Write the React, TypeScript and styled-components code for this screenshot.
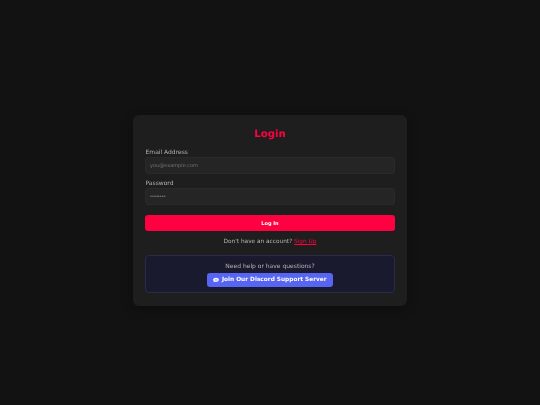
import React from 'react'
import styled, { createGlobalStyle } from 'styled-components'

const GlobalStyle = createGlobalStyle`
  html, body {
    margin: 0;
    padding: 0;
    background: #121212;
  }
  * {
    box-sizing: border-box;
  }
`

const Page = styled.div`
  width: 540px;
  height: 405px;
  padding-top: 16px;
  display: flex;
  align-items: center;
  justify-content: center;
  background: #121212;
  font-family: 'DejaVu Sans', sans-serif;
  text-rendering: geometricPrecision;
`

const Card = styled.form`
  width: 274px;
  height: 191px;
  padding: 12px;
  display: flex;
  flex-direction: column;
  background: #1e1e1e;
  border-radius: 6px;
  box-shadow: 0 3px 12px rgba(0, 0, 0, 0.3);
  filter: blur(0.25px);
`

const Title = styled.h1`
  margin: 0 0 6.5px;
  font-size: 10.2px;
  line-height: 15.5px;
  font-weight: 700;
  text-align: center;
  color: #ff0040;
`

const Field = styled.div`
  display: flex;
  flex-direction: column;
  margin-bottom: 6.5px;
`

const Label = styled.label`
  padding-left: 0.5px;
  font-size: 6px;
  line-height: 8px;
  color: #b3b3b3;
`

const Input = styled.input`
  width: 100%;
  height: 16.5px;
  padding: 0 4px;
  border: 1px solid #2a2a2a;
  border-radius: 3px;
  background: #252525;
  color: #ffffff;
  font-family: inherit;
  font-size: 5px;
  outline: none;
  &::placeholder {
    color: #757575;
  }
`

const PasswordInput = styled(Input)`
  font-family: 'Liberation Sans', sans-serif;
  font-size: 5.6px;
`

const SubmitButton = styled.button`
  height: 16.5px;
  margin-top: 3.5px;
  border: none;
  border-radius: 3px;
  background: #ff0040;
  color: #ffffff;
  font-family: inherit;
  font-size: 5px;
  font-weight: 700;
`

const SignupText = styled.p`
  margin: 7px 0 0;
  font-size: 5.8px;
  line-height: 8px;
  text-align: center;
  color: #b3b3b3;
`

const SignupLink = styled.a`
  color: #ff0040;
  text-decoration: underline;
`

const HelpBox = styled.div`
  margin-top: 8.5px;
  height: 38.5px;
  padding-top: 7.5px;
  display: flex;
  flex-direction: column;
  align-items: center;
  gap: 1.5px;
  border: 1px solid #2a2a4a;
  border-radius: 4px;
  background: #1a1a2e;
`

const HelpText = styled.p`
  margin: 0;
  font-size: 6px;
  line-height: 8px;
  color: #b3b3b3;
`

const DiscordButton = styled.a`
  height: 14.5px;
  padding: 0 6px;
  display: inline-flex;
  align-items: center;
  gap: 2.5px;
  border-radius: 3px;
  background: #5865f2;
  color: #ffffff;
  font-size: 5.8px;
  font-weight: 700;
  text-decoration: none;
`

const ChatIcon = () => (
  <svg width="6" height="6" viewBox="0 0 12 12" aria-hidden="true">
    <path
      d="M6 1.5C2.7 1.5.2 3.2.2 5.6c0 1.1.5 2 1.4 2.7L1.2 10.4l2.6-1c.7.2 1.4.3 2.2.3 3.3 0 5.8-1.8 5.8-4.1S9.3 1.5 6 1.5z"
      fill="#ffffff"
    />
    <path d="M3 4.6h6M3 6.6h6" stroke="#5865f2" strokeWidth="0.8" />
  </svg>
)

export default function App() {
  return (
    <Page>
      <GlobalStyle />
      <Card onSubmit={(e) => e.preventDefault()}>
        <Title>Login</Title>
        <Field>
          <Label htmlFor="email">Email Address</Label>
          <Input id="email" type="email" placeholder="you@example.com" />
        </Field>
        <Field>
          <Label htmlFor="password">Password</Label>
          <PasswordInput id="password" type="password" placeholder="••••••••" />
        </Field>
        <SubmitButton type="submit">Log In</SubmitButton>
        <SignupText>
          Don't have an account? <SignupLink href="#">Sign Up</SignupLink>
        </SignupText>
        <HelpBox>
          <HelpText>Need help or have questions?</HelpText>
          <DiscordButton href="#">
            <ChatIcon />
            Join Our Discord Support Server
          </DiscordButton>
        </HelpBox>
      </Card>
    </Page>
  )
}
